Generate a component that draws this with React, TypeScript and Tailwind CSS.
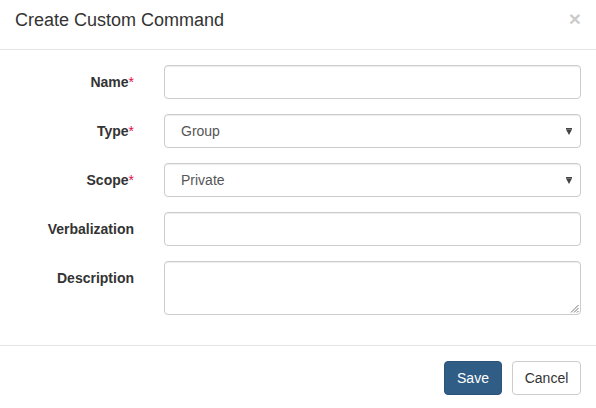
import React from "react";

const font = { fontFamily: '"Liberation Sans", Arial, sans-serif' };

function Label({ text, required }: { text: string; required?: boolean }) {
  return (
    <label className="w-[134px] shrink-0 pr-[15px] pt-[7px] text-right text-[14px] font-bold leading-[20px] text-[#333]">
      {text}
      {required && <span className="font-normal text-[#e0104a]">*</span>}
    </label>
  );
}

const box =
  "h-[34px] w-full rounded-[4px] border border-[#ccc] bg-white shadow-[inset_0_1px_1px_rgba(0,0,0,0.075)]";

function Select({ value }: { value: string }) {
  return (
    <div className={`${box} flex items-center justify-between pl-[16px] pr-[7px]`}>
      <span className="text-[14px] text-[#555]">{value}</span>
      <svg width="6" height="7" viewBox="0 0 6 7" className="mr-[1px]">
        <rect x="0" y="0" width="6" height="1.5" fill="#444" />
        <path d="M0 1.5 H6 L3 7 Z" fill="#444" />
      </svg>
    </div>
  );
}

export default function App() {
  return (
    <div className="h-[408px] w-[596px] overflow-hidden bg-white" style={font}>
      {/* Header */}
      <div className="flex h-[50px] items-start justify-between border-b border-[#e5e5e5] pl-[15px] pr-[15px] pt-[10px]">
        <h4 className="text-[18px] leading-[21px] text-[#333]">Create Custom Command</h4>
        <button className="mt-[-2px] text-[21px] font-bold leading-[21px] text-black opacity-20">×</button>
      </div>

      {/* Body */}
      <div className="flex flex-col gap-[15px] px-[15px] pb-[30px] pt-[15px]">
        <div className="flex gap-[15px]">
          <Label text="Name" required />
          <div className="flex-1">
            <div className={box} />
          </div>
        </div>
        <div className="flex gap-[15px]">
          <Label text="Type" required />
          <div className="flex-1">
            <Select value="Group" />
          </div>
        </div>
        <div className="flex gap-[15px]">
          <Label text="Scope" required />
          <div className="flex-1">
            <Select value="Private" />
          </div>
        </div>
        <div className="flex gap-[15px]">
          <Label text="Verbalization" />
          <div className="flex-1">
            <div className={box} />
          </div>
        </div>
        <div className="flex gap-[15px]">
          <Label text="Description" />
          <div className="relative flex-1">
            <div className={`${box} h-[54px]`} />
            <svg width="9" height="9" viewBox="0 0 9 9" className="absolute bottom-[2px] right-[2px]">
              <path d="M8.5 1 L1 8.5 M8.5 4 L4 8.5 M8.5 7 L7 8.5" stroke="#777" strokeWidth="1" />
            </svg>
          </div>
        </div>
      </div>

      {/* Footer */}
      <div className="flex justify-end gap-[10px] border-t border-[#e5e5e5] p-[15px]">
        <button className="h-[34px] w-[58px] rounded-[4px] border border-[#2a5478] bg-[#2f5d86] text-[14px] text-white">
          Save
        </button>
        <button className="h-[34px] w-[69px] rounded-[4px] border border-[#ccc] bg-white text-[14px] text-[#333]">
          Cancel
        </button>
      </div>
    </div>
  );
}
